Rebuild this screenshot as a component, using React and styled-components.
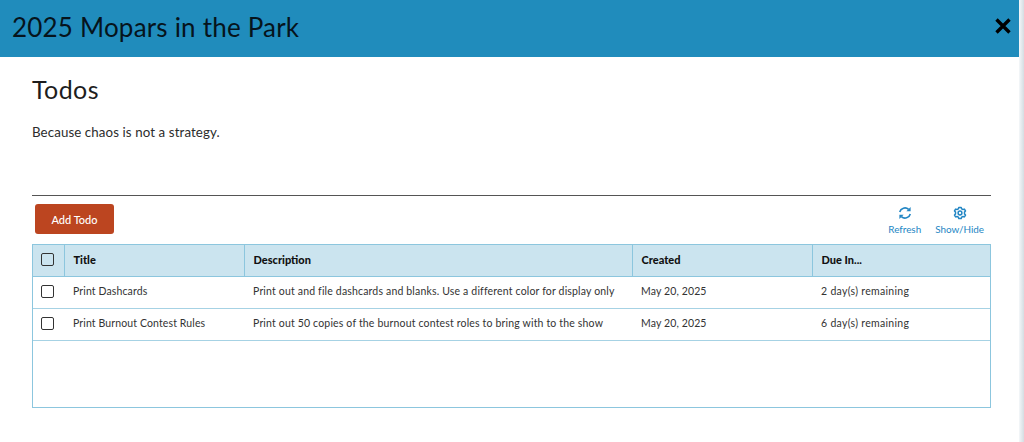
import React from 'react';
import styled, { createGlobalStyle } from 'styled-components';

const GlobalStyle = createGlobalStyle`
  html, body {
    margin: 0;
    padding: 0;
    background: #fff;
    overflow: hidden;
  }
  body {
    font-family: Lato, 'Open Sans', sans-serif;
    color: #1c1c1c;
  }
`;

const Page = styled.div`
  display: flex;
  width: 1024px;
  height: 442px;
  overflow: hidden;
`;

const Modal = styled.div`
  width: 1019px;
  flex: none;
  display: flex;
  flex-direction: column;
  background: #fff;
`;

// Neighbouring page that peeks out past the modal
const PageEdge = styled.div`
  flex: 1;
  background: linear-gradient(to right, #f4f7f9, #d5dde2);
`;

// ============================================================
// Header
// ============================================================
const Header = styled.header`
  height: 57px;
  flex: none;
  display: flex;
  justify-content: space-between;
  align-items: center;
  padding: 0 7px 0 12px;
  background: #208cbc;
`;

const HeaderTitle = styled.h1`
  margin: -2px 0 0;
  font-size: 26px;
  line-height: 57px;
  font-weight: 400;
  letter-spacing: 0.2px;
  color: #06141c;
`;

const CloseButton = styled.button`
  border: none;
  padding: 0;
  background: none;
  width: 18px;
  height: 18px;
  margin-top: -6px;
  color: #000;
  svg { display: block; }
`;

// ============================================================
// Body
// ============================================================
const Content = styled.main`
  padding: 19px 28px 0 32px;
`;

const SectionTitle = styled.h2`
  margin: 0;
  font-size: 25px;
  line-height: 26px;
  font-weight: 400;
  letter-spacing: 0.4px;
  color: #1d1d1d;
`;

const Tagline = styled.p`
  margin: 21px 0 0;
  font-size: 13.3px;
  line-height: 18px;
  letter-spacing: 0.1px;
  color: #2c2c2c;
`;

const Divider = styled.hr`
  margin: 54px 0 0;
  border: none;
  border-top: 1px solid #555;
`;

const Toolbar = styled.div`
  display: flex;
  justify-content: space-between;
  align-items: flex-start;
  height: 40px;
  padding: 8px 7px 0 3px;
`;

const AddButton = styled.button`
  width: 79px;
  height: 30px;
  padding: 0;
  border: none;
  border-radius: 3px;
  background: #bc4520;
  color: #fff;
  font-family: inherit;
  font-size: 11px;
  font-weight: 500;
`;

const ToolGroup = styled.div`
  display: flex;
  gap: 14px;
  padding-top: 2px;
`;

const ToolButton = styled.button`
  display: flex;
  flex-direction: column;
  align-items: center;
  gap: 3px;
  padding: 0;
  border: none;
  background: none;
  color: #2386c4;
  font-family: inherit;
  font-size: 9.9px;
  line-height: 12px;
  svg { display: block; }
`;

// ============================================================
// Table
// ============================================================
const TableFrame = styled.div`
  height: 164px;
  box-sizing: border-box;
  border: 1px solid #8cc6de;
`;

const Table = styled.table`
  width: 100%;
  table-layout: fixed;
  border-collapse: collapse;
`;

const HeaderCell = styled.th`
  width: ${p => p.$width}px;
  height: 31px;
  padding: 0 9px 2px;
  box-sizing: border-box;
  background: #cbe4ef;
  border-bottom: 1px solid #8cc6de;
  border-right: ${p => (p.$last ? 'none' : '1px solid #8cc6de')};
  text-align: left;
  font-size: 11px;
  font-weight: 900;
  color: #111;
`;

const Cell = styled.td`
  height: 32px;
  padding: 0 9px 2px;
  box-sizing: border-box;
  border-bottom: 1px solid #a6d2e4;
  font-size: 10.5px;
  letter-spacing: ${p => p.$spacing || 0.12}px;
  color: #333;
  white-space: nowrap;
  overflow: hidden;
`;

const CheckHeaderCell = styled(HeaderCell)`
  padding: 0 8px 2px;
`;

const CheckCell = styled(Cell)`
  padding: 0 8px 2px;
`;

const Check = styled.span`
  display: block;
  width: 13px;
  height: 13px;
  box-sizing: border-box;
  border: 1.5px solid #333;
  border-radius: 2px;
  background: #fff;
`;

const HeaderCheck = styled(Check)`
  background: transparent;
`;

const RefreshIcon = () => (
  <svg width="14" height="14" viewBox="0 0 14 14" fill="none" stroke="currentColor" strokeWidth="1.6">
    <path d="M1.7 6 A5.4 5.4 0 0 1 10.6 3.4" />
    <path d="M12.3 8 A5.4 5.4 0 0 1 3.4 10.6" />
    <path d="M12.6 1 V5.2 H8.4 Z" fill="currentColor" stroke="none" />
    <path d="M1.4 13 V8.8 H5.6 Z" fill="currentColor" stroke="none" />
  </svg>
);

const GearIcon = () => (
  <svg width="14" height="14" viewBox="0 0 14 14" fill="none" stroke="currentColor" strokeWidth="1.5">
    <path d="M5.8 1.4 H8.2 L8.6 2.8 L10 3.5 L11.4 3.1 L12.5 5 L11.5 6.1 V7.9 L12.5 9 L11.4 10.9 L10 10.5 L8.6 11.2 L8.2 12.6 H5.8 L5.4 11.2 L4 10.5 L2.6 10.9 L1.5 9 L2.5 7.9 V6.1 L1.5 5 L2.6 3.1 L4 3.5 L5.4 2.8 Z" strokeLinejoin="round" />
    <circle cx="7" cy="7" r="1.9" />
  </svg>
);

const columns = [
  { label: 'Title', width: 180 },
  { label: 'Description', width: 388 },
  { label: 'Created', width: 180 },
  { label: 'Due In...', width: 178 },
];

const todos = [
  {
    title: 'Print Dashcards',
    description: 'Print out and file dashcards and blanks. Use a different color for display only',
    created: 'May 20, 2025',
    due: '2 day(s) remaining',
  },
  {
    title: 'Print Burnout Contest Rules',
    description: 'Print out 50 copies of the burnout contest roles to bring with to the show',
    created: 'May 20, 2025',
    due: '6 day(s) remaining',
  },
];

export default function App() {
  return (
    <Page>
      <GlobalStyle />
      <Modal>
        <Header>
          <HeaderTitle>2025 Mopars in the Park</HeaderTitle>
          <CloseButton aria-label="Close">
            <svg width="18" height="18" viewBox="0 0 18 18">
              <path d="M2.5 2.5 L15.5 15.5 M15.5 2.5 L2.5 15.5" stroke="currentColor" strokeWidth="3.4" fill="none" />
            </svg>
          </CloseButton>
        </Header>
        <Content>
          <SectionTitle>Todos</SectionTitle>
          <Tagline>Because chaos is not a strategy.</Tagline>
          <Divider />
          <Toolbar>
            <AddButton>Add Todo</AddButton>
            <ToolGroup>
              <ToolButton>
                <RefreshIcon />
                Refresh
              </ToolButton>
              <ToolButton>
                <GearIcon />
                Show/Hide
              </ToolButton>
            </ToolGroup>
          </Toolbar>
          <TableFrame>
            <Table>
              <thead>
                <tr>
                  <CheckHeaderCell $width={31}>
                    <HeaderCheck />
                  </CheckHeaderCell>
                  {columns.map((col, i) => (
                    <HeaderCell key={col.label} $width={col.width} $last={i === columns.length - 1}>
                      {col.label}
                    </HeaderCell>
                  ))}
                </tr>
              </thead>
              <tbody>
                {todos.map(todo => (
                  <tr key={todo.title}>
                    <CheckCell><Check /></CheckCell>
                    <Cell>{todo.title}</Cell>
                    <Cell $spacing={0.17}>{todo.description}</Cell>
                    <Cell>{todo.created}</Cell>
                    <Cell $spacing={0.3}>{todo.due}</Cell>
                  </tr>
                ))}
              </tbody>
            </Table>
          </TableFrame>
        </Content>
      </Modal>
      <PageEdge />
    </Page>
  );
}
